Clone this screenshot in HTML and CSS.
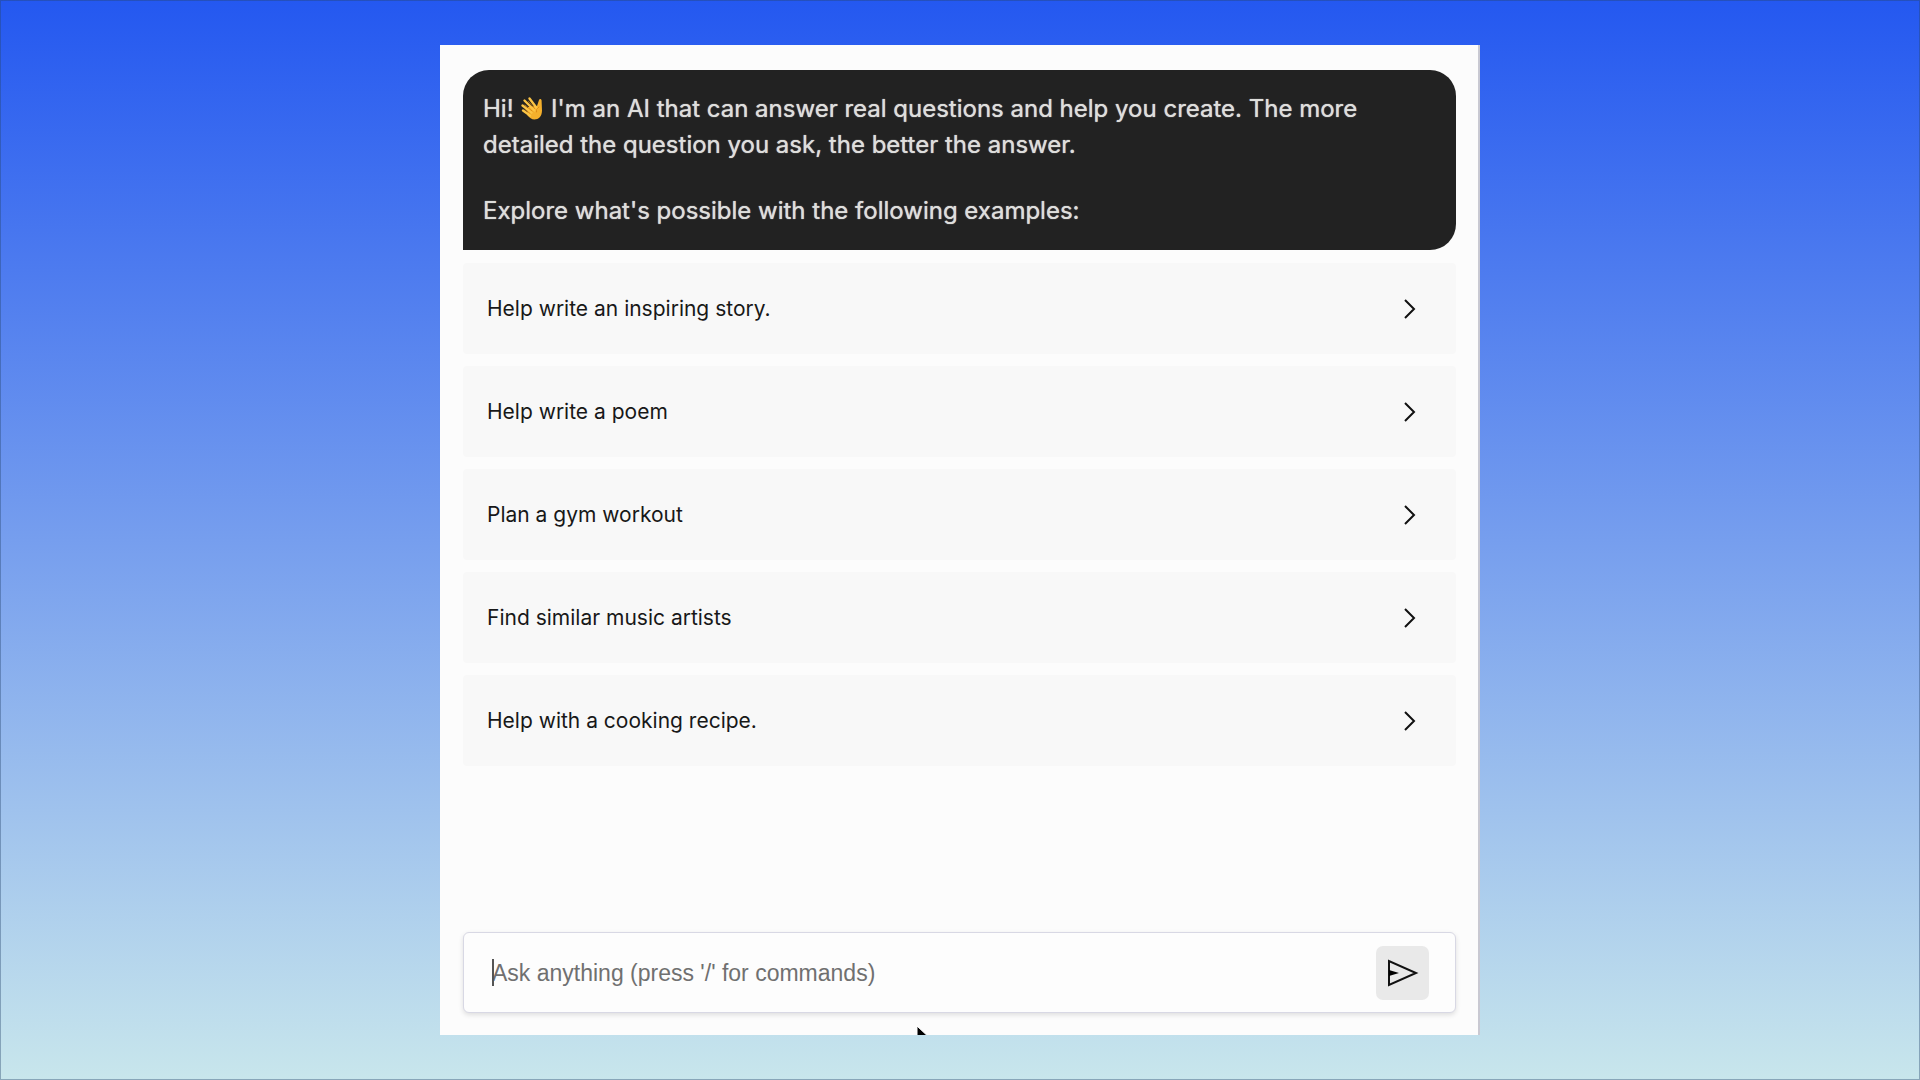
FILE: index.html
```html
<!DOCTYPE html>
<html lang="en">
<head>
<meta charset="utf-8">
<meta name="viewport" content="width=device-width, initial-scale=1">
<title>AI chat</title>
<link rel="stylesheet" href="styles.css">
</head>
<body>
<main class="panel">
  <div class="bubble">
    <p>Hi! <svg class="wave" viewBox="0 0 24 24" aria-hidden="true"><path fill="#f5b02c" d="M8 11l9-1 2-6c.5-1.500 2.500-1 2.600.5l.4 10c0 6-3.500 9-7.500 9-3 0-5-2-7-4z"/><g fill="none" stroke="#fcc444" stroke-linecap="round" stroke-width="2.400"><path d="M3 14.500l7 5M2.500 9.500l9 7M4.500 4.500l10 10M9.500 2.500l7.500 10"/></g><path fill="none" stroke="#d98312" stroke-width=".8" stroke-linecap="round" d="M5 13.500l5 4M5 9l7 6M8.500 5.500l6 7M19 11c-2 1-3 3-2.500 5"/></svg> I'm an AI that can answer real questions and help you create. The more detailed the question you ask, the better the answer.</p>
    <p>Explore what's possible with the following examples:</p>
  </div>
  <div class="examples">
    <button class="example" type="button">Help write an inspiring story.<svg class="chevron" viewBox="0 0 12 20" aria-hidden="true"><path d="M1 1l9 9-9 9"/></svg></button>
    <button class="example" type="button">Help write a poem<svg class="chevron" viewBox="0 0 12 20" aria-hidden="true"><path d="M1 1l9 9-9 9"/></svg></button>
    <button class="example" type="button">Plan a gym workout<svg class="chevron" viewBox="0 0 12 20" aria-hidden="true"><path d="M1 1l9 9-9 9"/></svg></button>
    <button class="example" type="button">Find similar music artists<svg class="chevron" viewBox="0 0 12 20" aria-hidden="true"><path d="M1 1l9 9-9 9"/></svg></button>
    <button class="example" type="button">Help with a cooking recipe.<svg class="chevron" viewBox="0 0 12 20" aria-hidden="true"><path d="M1 1l9 9-9 9"/></svg></button>
  </div>
  <form class="composer">
    <input class="prompt" type="text" aria-label="Message" placeholder="Ask anything (press '/' for commands)">
    <span class="caret"></span>
    <button class="send" type="button" aria-label="Send"><svg viewBox="0 0 32 28" aria-hidden="true"><path class="outline" d="M2 2v24l27-12z"/><path d="M2 11l10 3-10 3z"/></svg></button>
  </form>
  <span class="scroll-thumb"></span>
  <svg class="pointer" viewBox="0 0 18 26" aria-hidden="true"><path d="M1 1v21l5-5 4 8 4-2-4-7h7z"/></svg>
</main>
</body>
</html>
```
FILE: styles.css
```css
* { box-sizing: border-box; }

body {
  margin: 0;
  min-height: 100vh;
  padding: 45px 24px;
  display: flex;
  justify-content: center;
  background: linear-gradient(#2458f0, #769eee 50%, #c8e6ec);
  box-shadow: inset 0 0 0 1px rgba(40, 70, 110, 0.4);
  font-family: Inter, "Liberation Sans", sans-serif;
}

.panel {
  position: relative;
  flex: 1;
  max-width: 1040px;
  padding: 25px 22px 22px 23px;
  display: flex;
  flex-direction: column;
  gap: 13px;
  overflow: hidden;
  background: #fcfcfc;
  border-right: 2px solid #c9c9d2;
}

.bubble {
  padding: 21px 20px;
  border-radius: 26px 26px 26px 0;
  background: #222222;
  color: #dededc;
  font-size: 24px;
  font-weight: 400;
  line-height: 36px;
  text-shadow: 0 0 1px #dededc;
}

.bubble p { margin: 0; }
.bubble p + p { margin-top: 30px; }

.wave {
  width: 24px;
  height: 24px;
  vertical-align: -3px;
}

.examples {
  display: flex;
  flex-direction: column;
  gap: 12px;
}

.example {
  display: flex;
  align-items: center;
  justify-content: space-between;
  height: 91px;
  padding: 0 40px 0 24px;
  border: 0;
  border-radius: 4px;
  background: #f8f8f8;
  color: #181818;
  font: 400 21px/28px Inter, "Liberation Sans", sans-serif;
  text-align: left;
}

.chevron {
  width: 12px;
  height: 20px;
  fill: none;
  stroke: #111111;
  stroke-width: 2;
}

.composer {
  position: relative;
  display: flex;
  align-items: center;
  height: 81px;
  margin-top: auto;
  padding: 0 26px 0 28px;
  border: 1px solid #d8d8e4;
  border-radius: 6px;
  background: #fdfdfd;
  box-shadow: 0 2px 5px rgba(0, 0, 0, 0.12);
}

.prompt {
  flex: 1;
  min-width: 0;
  padding: 0;
  border: 0;
  outline: 0;
  background: none;
  font: 23px/32px "Liberation Sans", Arial, sans-serif;
}

.prompt::placeholder { color: #707070; opacity: 1; }

.caret {
  position: absolute;
  left: 28px;
  top: 26px;
  width: 2px;
  height: 27px;
  background: #555555;
}

.send {
  width: 53px;
  height: 54px;
  padding: 0;
  display: grid;
  place-items: center;
  border: 0;
  border-radius: 7px;
  background: #e9e9e9;
}

.send svg { width: 32px; height: 28px; }
.outline { fill: none; stroke: #111111; stroke-width: 2; }

.scroll-thumb {
  position: absolute;
  top: 0;
  right: -2px;
  width: 2px;
  height: 60px;
  background: #30363f;
}

.pointer {
  position: absolute;
  left: 476px;
  bottom: -16px;
  width: 18px;
  height: 26px;
  stroke: #ffffff;
}
```
